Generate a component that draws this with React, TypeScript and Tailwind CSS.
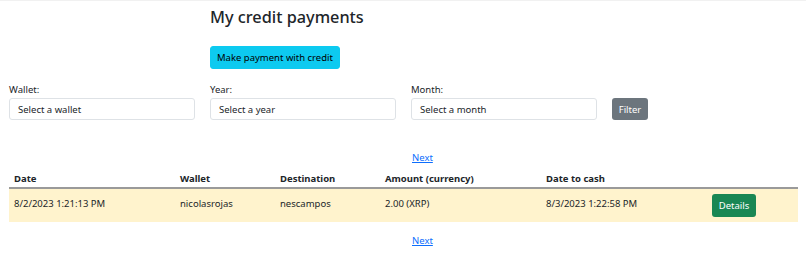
import React from "react";

const cols = "grid grid-cols-[166px_100px_105px_161px_166px_1fr]";

export default function App() {
  return (
    <div className="font-['Noto_Sans',sans-serif] text-[#212529] text-[9.5px] leading-[15px] bg-white min-h-[273px] pl-[9px] pr-[8px] border-t border-[#f1f1f1]">
      <div className="grid grid-cols-[201px_201px_201px_1fr]">
        <div className="col-start-2 col-span-3">
          <h1 className="text-[16.3px] leading-[22px] font-medium mt-[5px] text-[#212529]">My credit payments</h1>
          <button className="mt-[18px] h-[23px] px-[6px] bg-[#0dcaf0] rounded-[3px] text-[9.5px] text-[#000] border border-[#0dcaf0]">
            Make payment with credit
          </button>
        </div>
      </div>

      <div className="grid grid-cols-[201px_201px_201px_1fr] mt-[14px]">
        {[
          ["Wallet:", "Select a wallet"],
          ["Year:", "Select a year"],
          ["Month:", "Select a month"],
        ].map(([l, p]) => (
          <div key={l} className="flex flex-col">
            <label className="text-[9.5px] leading-[14px] text-[#212529]">{l}</label>
            <div className="mt-[1px] w-[186px] h-[22px] border border-[#dee2e6] rounded-[3px] flex items-center pl-[8px] text-[9.5px] text-[#212529]">
              {p}
            </div>
          </div>
        ))}
        <div className="flex items-end">
          <button className="w-[36px] h-[22px] bg-[#6c757d] rounded-[3px] text-white text-[9.5px]">Filter</button>
        </div>
      </div>

      <div className="grid grid-cols-[201px_201px_201px_1fr] mt-[30px]">
        <div className="col-start-3">
          <a href="#" className="text-[#0d6efd] underline text-[9.5px] leading-[14px] ml-[1px]">Next</a>
        </div>
      </div>

      <div className="mt-[5px] w-[789px]">
        <div className={`${cols} font-bold border-b-2 border-[#9a9a9a] h-[19px] items-center`}>
          <div className="pl-[5px]">Date</div>
          <div className="pl-[5px]">Wallet</div>
          <div className="pl-[5px]">Destination</div>
          <div className="pl-[5px]">Amount (currency)</div>
          <div className="pl-[5px]">Date to cash</div>
          <div></div>
        </div>
        <div className={`${cols} bg-[#fff3cd] h-[33px]`}>
          <div className="pl-[5px] pt-[7px]">8/2/2023 1:21:13 PM</div>
          <div className="pl-[5px] pt-[7px]">nicolasrojas</div>
          <div className="pl-[5px] pt-[7px]">nescampos</div>
          <div className="pl-[5px] pt-[7px]">2.00 (XRP)</div>
          <div className="pl-[5px] pt-[7px]">8/3/2023 1:22:58 PM</div>
          <div className="pl-[5px] pt-[5px]">
            <button className="w-[44px] h-[23px] bg-[#198754] rounded-[3px] text-white text-[9.5px]">Details</button>
          </div>
        </div>
      </div>

      <div className="grid grid-cols-[201px_201px_201px_1fr] mt-[11px]">
        <div className="col-start-3">
          <a href="#" className="text-[#0d6efd] underline text-[9.5px] leading-[14px] ml-[1px]">Next</a>
        </div>
      </div>
    </div>
  );
}
